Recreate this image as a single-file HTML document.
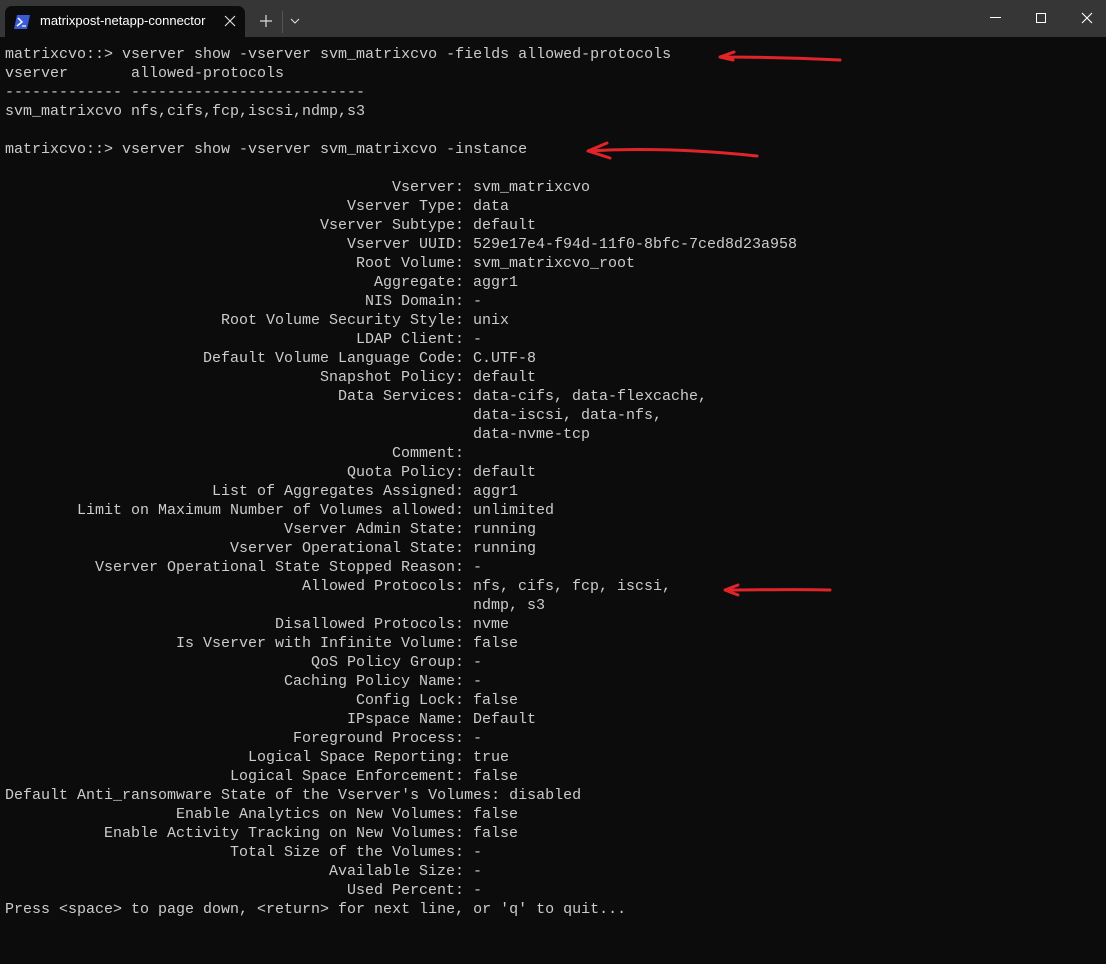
<!DOCTYPE html>
<html><head><meta charset="utf-8"><style>
html,body{margin:0;padding:0;width:1106px;height:964px;overflow:hidden;background:#0c0c0c}
.bar{position:absolute;left:0;top:0;width:1106px;height:37px;background:#363636}
.tab{position:absolute;left:5px;top:6px;width:240px;height:31px;background:#0c0c0c;border-radius:7px 7px 0 0}
.tab .t{position:absolute;left:35px;top:7px;font:13px "Liberation Sans",sans-serif;color:#fff;white-space:nowrap;width:170px;overflow:hidden}
.term{position:absolute;left:5px;top:45px;font:15px/19px "Liberation Mono",monospace;color:#cccccc}
.r{display:flex;height:19px;white-space:pre}
.l{width:450px;text-align:right;flex:none}
</style></head><body>
<div class="bar">
<div class="tab">
<svg style="position:absolute;left:9px;top:9px" width="16" height="14"><path d="M3 0H16L13 14H0Z" fill="#3b5bd6"/><path d="M4 3L8 7L3 11" stroke="#fff" stroke-width="1.5" fill="none"/><path d="M8 11H12" stroke="#fff" stroke-width="1.2"/></svg>
<div class="t">matrixpost-netapp-connector</div>
<svg style="position:absolute;left:219px;top:9px" width="12" height="12"><path d="M1 1L11 11M11 1L1 11" stroke="#ddd" stroke-width="1.2"/></svg>
</div>
<svg style="position:absolute;left:259px;top:14px" width="14" height="14"><path d="M7 1V13M1 7H13" stroke="#ddd" stroke-width="1.2"/></svg>
<div style="position:absolute;left:282px;top:11px;width:1px;height:22px;background:#555"></div>
<svg style="position:absolute;left:290px;top:18px" width="10" height="6"><path d="M1 1L5 5L9 1" stroke="#ddd" stroke-width="1.1" fill="none"/></svg>
<div style="position:absolute;left:990px;top:17px;width:11px;height:1px;background:#fff"></div>
<div style="position:absolute;left:1036px;top:13px;width:8px;height:8px;border:1px solid #fff"></div>
<svg style="position:absolute;left:1081px;top:12px" width="12" height="12"><path d="M1 1L11 11M11 1L1 11" stroke="#fff" stroke-width="1.1"/></svg>
</div>
<div class="term"><div class="r">matrixcvo::&gt; vserver show -vserver svm_matrixcvo -fields allowed-protocols</div><div class="r">vserver       allowed-protocols</div><div class="r">------------- --------------------------</div><div class="r">svm_matrixcvo nfs,cifs,fcp,iscsi,ndmp,s3</div><div class="r"></div><div class="r">matrixcvo::&gt; vserver show -vserver svm_matrixcvo -instance</div><div class="r"></div><div class="r"><span class="l">Vserver</span>: svm_matrixcvo</div><div class="r"><span class="l">Vserver Type</span>: data</div><div class="r"><span class="l">Vserver Subtype</span>: default</div><div class="r"><span class="l">Vserver UUID</span>: 529e17e4-f94d-11f0-8bfc-7ced8d23a958</div><div class="r"><span class="l">Root Volume</span>: svm_matrixcvo_root</div><div class="r"><span class="l">Aggregate</span>: aggr1</div><div class="r"><span class="l">NIS Domain</span>: -</div><div class="r"><span class="l">Root Volume Security Style</span>: unix</div><div class="r"><span class="l">LDAP Client</span>: -</div><div class="r"><span class="l">Default Volume Language Code</span>: C.UTF-8</div><div class="r"><span class="l">Snapshot Policy</span>: default</div><div class="r"><span class="l">Data Services</span>: data-cifs, data-flexcache,</div><div class="r"><span class="l"></span>  data-iscsi, data-nfs,</div><div class="r"><span class="l"></span>  data-nvme-tcp</div><div class="r"><span class="l">Comment</span>:</div><div class="r"><span class="l">Quota Policy</span>: default</div><div class="r"><span class="l">List of Aggregates Assigned</span>: aggr1</div><div class="r"><span class="l">Limit on Maximum Number of Volumes allowed</span>: unlimited</div><div class="r"><span class="l">Vserver Admin State</span>: running</div><div class="r"><span class="l">Vserver Operational State</span>: running</div><div class="r"><span class="l">Vserver Operational State Stopped Reason</span>: -</div><div class="r"><span class="l">Allowed Protocols</span>: nfs, cifs, fcp, iscsi,</div><div class="r"><span class="l"></span>  ndmp, s3</div><div class="r"><span class="l">Disallowed Protocols</span>: nvme</div><div class="r"><span class="l">Is Vserver with Infinite Volume</span>: false</div><div class="r"><span class="l">QoS Policy Group</span>: -</div><div class="r"><span class="l">Caching Policy Name</span>: -</div><div class="r"><span class="l">Config Lock</span>: false</div><div class="r"><span class="l">IPspace Name</span>: Default</div><div class="r"><span class="l">Foreground Process</span>: -</div><div class="r"><span class="l">Logical Space Reporting</span>: true</div><div class="r"><span class="l">Logical Space Enforcement</span>: false</div><div class="r">Default Anti_ransomware State of the Vserver's Volumes: disabled</div><div class="r"><span class="l">Enable Analytics on New Volumes</span>: false</div><div class="r"><span class="l">Enable Activity Tracking on New Volumes</span>: false</div><div class="r"><span class="l">Total Size of the Volumes</span>: -</div><div class="r"><span class="l">Available Size</span>: -</div><div class="r"><span class="l">Used Percent</span>: -</div><div class="r">Press &lt;space&gt; to page down, &lt;return&gt; for next line, or 'q' to quit...</div></div>
<svg style="position:absolute;left:0;top:0" width="1106" height="964" fill="none" stroke="#e0242a" stroke-width="3" stroke-linecap="round">
<path d="M720 57C760 57 800 58 840 60M720 57L734 52M720 57L733 60"/>
<path d="M588 151C640 148 700 150 757 156M588 151L607 143M588 151L610 158"/>
<path d="M725 590C760 590 795 589 830 590M725 590L738 585M725 590L738 595"/>
</svg>
</body></html>
